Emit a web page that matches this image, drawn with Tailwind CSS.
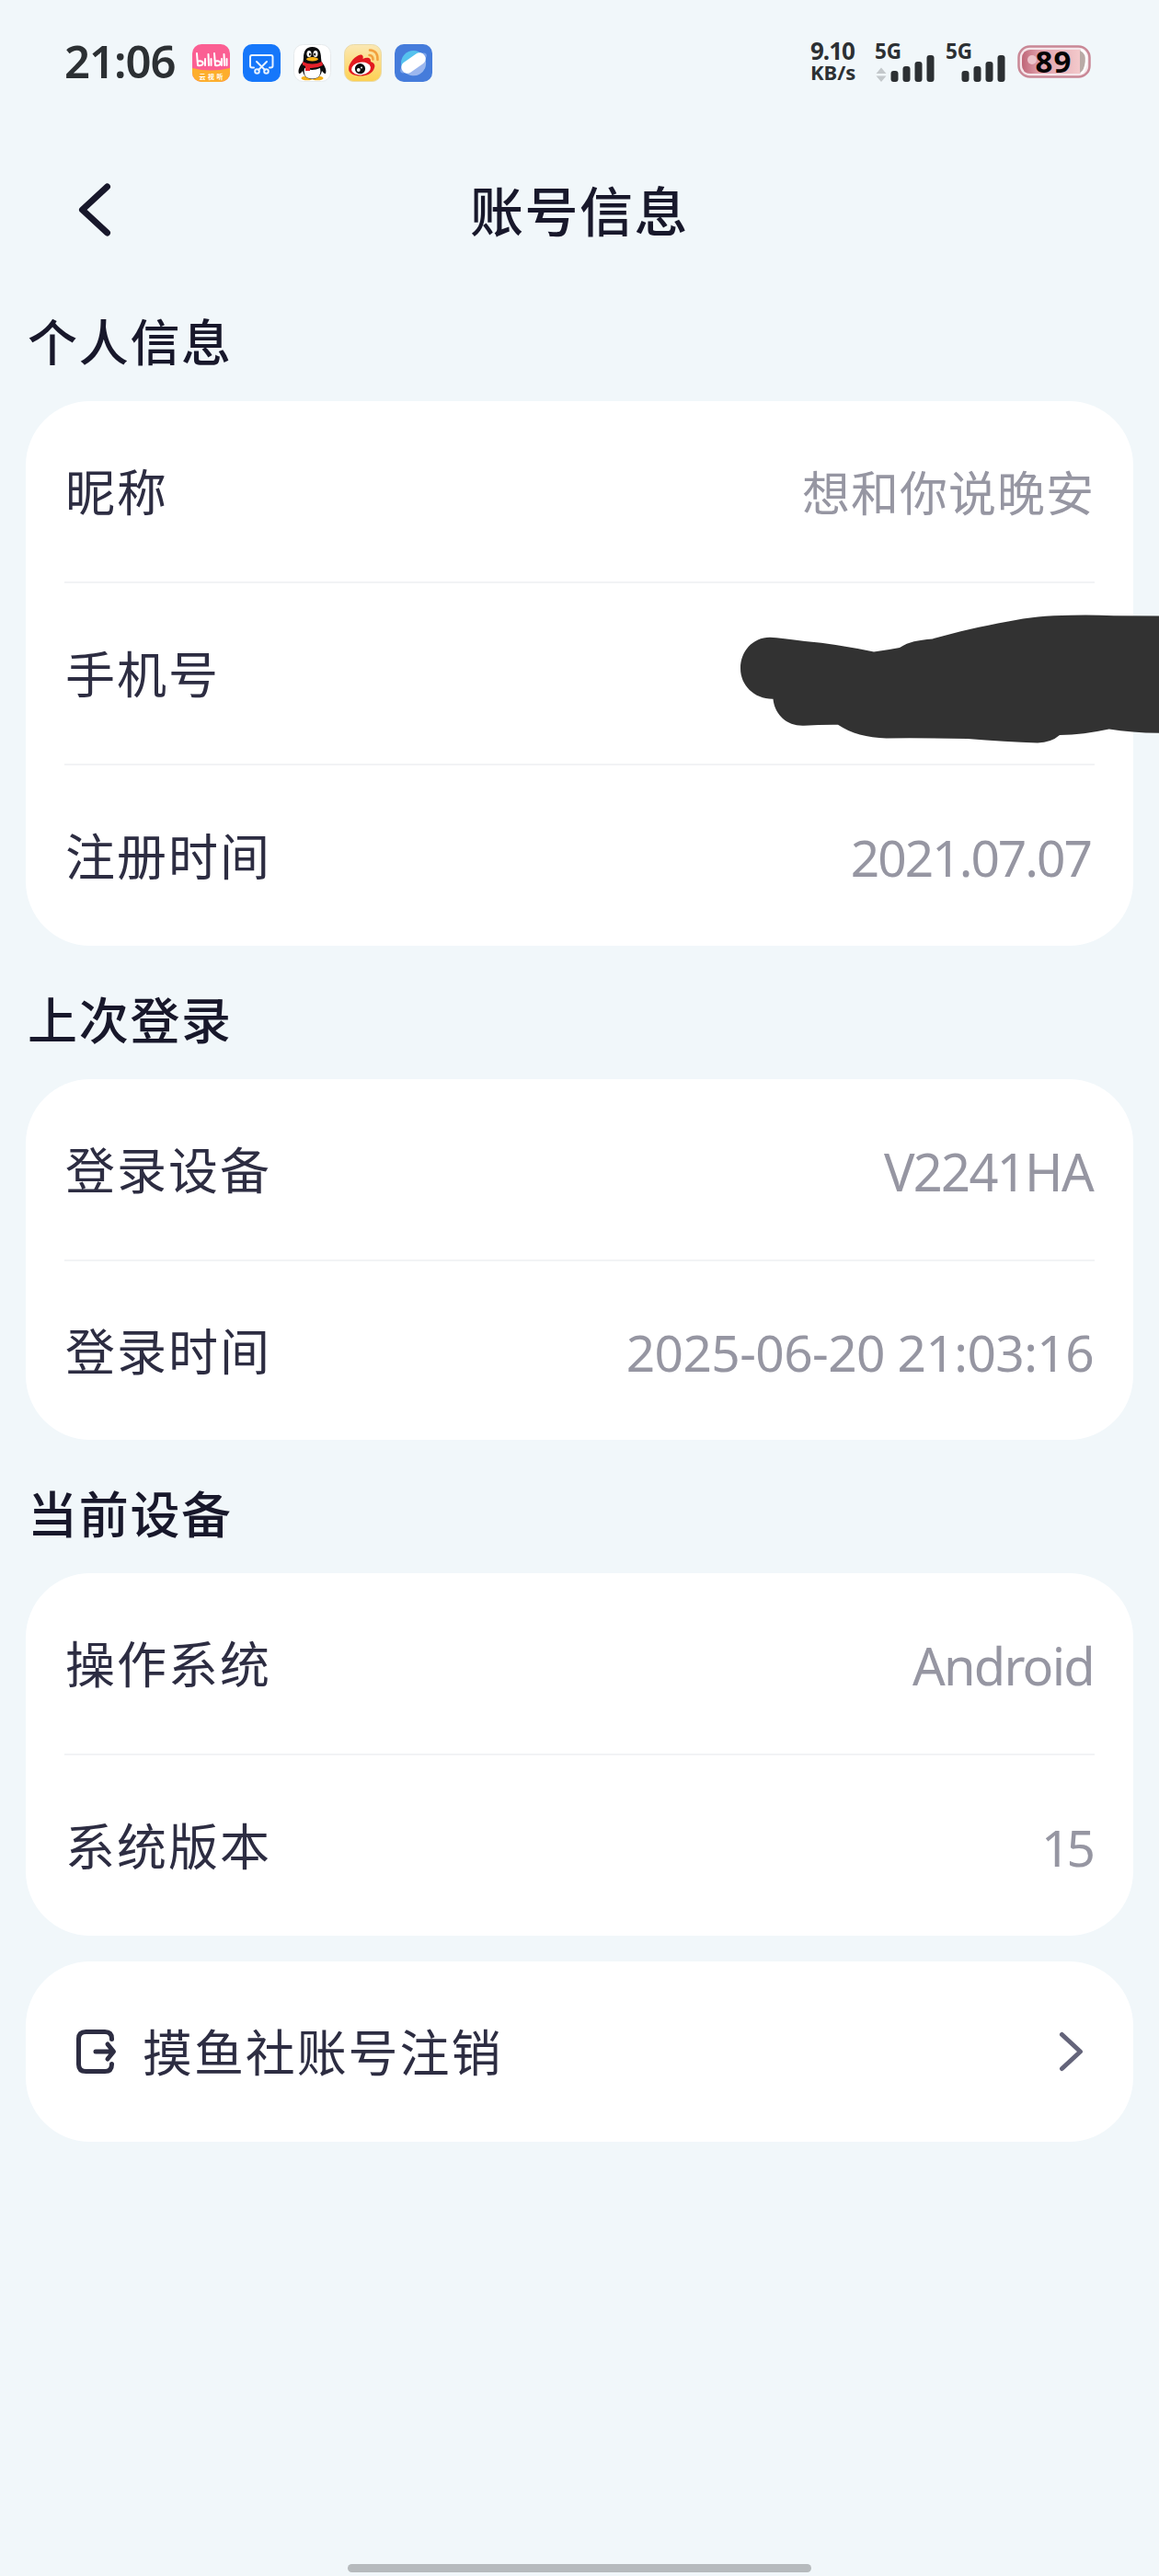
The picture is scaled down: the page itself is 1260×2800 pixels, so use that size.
<!DOCTYPE html>
<html lang="zh-CN">
<head>
<meta charset="utf-8">
<title>账号信息</title>
<script src="https://cdn.jsdelivr.net/npm/@tailwindcss/browser@4"></script>
</head>
<body class="bg-[#f1f7fa]">
<div class="relative flex h-[2800px] w-[1260px] flex-col overflow-hidden bg-[#f1f7fa] font-['Noto_Sans','Noto_Sans_CJK_SC',sans-serif] text-[#2d2d42]">

  <!-- status bar -->
  <div class="flex h-[136px] shrink-0 items-center justify-between pl-[70px] pr-[74px] text-[#2c3033]">
    <div class="flex items-center">
      <span class="w-[139px] pb-[4px] text-[49px] font-semibold leading-none tracking-[-1px]">21:06</span>
      <div class="flex gap-[14px]">
        <svg class="size-[41px]" viewBox="0 0 41 41">
          <defs>
            <clipPath id="app"><rect width="41" height="41" rx="10"/></clipPath>
            <linearGradient id="wb" x1="0" y1="0" x2="0" y2="1"><stop offset="0" stop-color="#fbe8b4"/><stop offset="1" stop-color="#fdd152"/></linearGradient>
          </defs>
          <g clip-path="url(#app)">
            <rect width="41" height="41" fill="#fb5f93"/>
            <path d="M0 26q20 5 41 0v16H0z" fill="#fdae2c"/>
            <g fill="none" stroke="#fff" stroke-width="2" stroke-linecap="round" stroke-linejoin="round">
              <path d="M5 10l1 13c7 2 8-6 .5-4.500M14 16v7M17.500 11l.5 12M20.500 16v7M24 10l1 13c7 2 8-6 .5-4.500M32 16v7M34.500 11l.5 12M37.500 16v7"/>
            </g>
            <text x="20.500" y="37.500" text-anchor="middle" font-size="7" font-weight="700" textLength="26" fill="#fff">云视听</text>
          </g>
        </svg>
        <svg class="size-[41px]" viewBox="0 0 41 41">
          <rect width="41" height="41" rx="10" fill="#1677fa"/>
          <g fill="none" stroke="#e8f2ff" stroke-width="2" stroke-linecap="round">
            <path d="M12 25.500H10q-2 0-2-2V14q0-2 2-2h20.500q2 0 2 2v9.500q0 2-2 2H29"/>
            <path d="M15 19l9 9M26 19l-9 9"/>
            <circle cx="15.500" cy="29.500" r="2.300"/><circle cx="25.500" cy="29.500" r="2.300"/>
          </g>
        </svg>
        <svg class="size-[41px]" viewBox="0 0 41 41">
          <rect x=".5" y=".5" width="40" height="40" rx="10" fill="#fff" stroke="#e6eaec"/>
          <ellipse cx="15" cy="37" rx="6.500" ry="2.300" fill="#f7b21a"/><ellipse cx="26" cy="37" rx="6.500" ry="2.300" fill="#f7b21a"/>
          <path d="M20.500 3C13 3 11 8.500 11 15l-.5 4C7 23.500 4.500 28 6 32c1.500.5 3-1.500 4-3 1 5 4.500 9 10.500 9S30 34 31 29c1 1.500 2.500 3.500 4 3 1.500-4-1-8.500-4.500-13l-.5-4c0-6.500-2-12-9.500-12z" fill="#0c0c0e"/>
          <path d="M12 26q8 4 17 0 2 11.500-8.500 11.500T12 26z" fill="#fff"/>
          <ellipse cx="17" cy="10.500" rx="2.500" ry="3.500" fill="#fff"/><ellipse cx="24" cy="10.500" rx="2.500" ry="3.500" fill="#fff"/>
          <ellipse cx="17.800" cy="11" rx="1" ry="1.500" fill="#111"/><ellipse cx="23.200" cy="11" rx="1" ry="1.500" fill="#111"/>
          <ellipse cx="20.500" cy="16.300" rx="6.500" ry="2.200" fill="#f7b21a"/>
          <path d="M10 19q10.500 5 21 0l1 4q-7 3.500-14 3v3h-5v-5l-3-1.500z" fill="#e5212b"/>
        </svg>
        <svg class="size-[41px]" viewBox="0 0 41 41">
          <rect x=".5" y=".5" width="40" height="40" rx="10" fill="url(#wb)" stroke="#e9d9a6"/>
          <path d="M5 27c0-7 8-15 13-15.500 3 0 3 2.500 2.500 4.500 4-2 9-2 8.500 3 5 1.500 5 5 3.500 8-2 5-8 7.500-14.500 7.500S5 32 5 27z" fill="#e2191f"/>
          <ellipse cx="18.500" cy="26.500" rx="10.500" ry="6.800" fill="#fff" transform="rotate(-8 18.500 26.500)"/>
          <circle cx="17.500" cy="26.700" r="5.600" fill="#0d0d0d"/><circle cx="15.800" cy="28" r="1.900" fill="#fff"/><circle cx="19" cy="25.500" r=".9" fill="#fff"/>
          <path d="M28 6.500q9 .5 8.500 10.500M27.500 12q4 .5 4 4.500" fill="none" stroke="#f2a03d" stroke-width="2.500" stroke-linecap="round"/>
        </svg>
        <svg class="size-[41px]" viewBox="0 0 41 41">
          <rect width="41" height="41" rx="10" fill="#457cdb"/>
          <ellipse cx="20.500" cy="20.500" rx="17" ry="6" transform="rotate(-35 20.500 20.500)" fill="#7fa6ea"/>
          <circle cx="20.500" cy="20.500" r="13.500" fill="#56c2ee"/>
          <path d="M33.500 16.500A13.500 13.500 0 0 1 10 29z" fill="#9cb7ee"/>
          <rect x="6" y="14" width="29" height="13" rx="6" transform="rotate(-35 20.500 20.500)" fill="#fff"/>
        </svg>
      </div>
    </div>

    <div class="flex items-center">
      <div class="flex w-[70px] flex-col pb-[3px] font-bold leading-none">
        <span class="text-[26px] leading-[24px] tracking-[-1px]">9.10</span>
        <span class="text-[22px] leading-[23px]">KB/s</span>
      </div>
      <svg class="h-[44px] w-[155px] overflow-visible" viewBox="950 45 155 44" fill="#2c3033">
        <text x="950" y="62.500" font-size="22.500" font-weight="700" textLength="29">5G</text>
        <text x="1027" y="62.500" font-size="22.500" font-weight="700" textLength="29">5G</text>
        <path d="M951.500 79l5.500-6.500 5.500 6.500zM951.500 81.500h11L957 88z" fill="#c3c8cb"/>
        <rect x="967.500" y="76" width="8" height="12" rx="3"/><rect x="980.500" y="71" width="8" height="17" rx="3"/><rect x="993.500" y="66" width="8" height="22" rx="3"/><rect x="1006.500" y="59" width="8" height="29" rx="3"/>
        <rect x="1044.500" y="76" width="8" height="12" rx="3"/><rect x="1057.500" y="71" width="8" height="17" rx="3"/><rect x="1070.500" y="66" width="8" height="22" rx="3"/><rect x="1083.500" y="59" width="8" height="29" rx="3"/>
      </svg>
      <svg class="mb-[2px] h-[36px] w-[80px] overflow-visible" viewBox="0 0 80 36">
        <defs><linearGradient id="bt"><stop offset="0" stop-color="#bf6577"/><stop offset=".3" stop-color="#e0a0ab"/><stop offset="1" stop-color="#f3c9cb"/></linearGradient></defs>
        <rect x="1.500" y="1.500" width="77" height="33" rx="12" fill="#f5e6ea" stroke="#c98896" stroke-width="2.500"/>
        <rect x="5" y="5" width="70" height="26" rx="10" fill="#b9aaa6"/>
        <path d="M15 5h53v26H15Q5 31 5 21v-6Q5 5 15 5z" fill="url(#bt)"/>
        <path d="M69 5q7 3 6 13t-6 13" fill="none" stroke="#fff" stroke-width="2.500"/>
        <circle cx="16" cy="16" r="5" fill="#edc4cb"/>
        <text x="39" y="29.500" text-anchor="middle" font-size="33" font-weight="700" textLength="39" fill="#050505">89</text>
      </svg>
    </div>
  </div>

  <!-- title bar -->
  <div class="grid h-[188px] shrink-0 grid-cols-[1fr_auto_1fr] items-center pl-[84px] pr-[84px] text-[#18182b]">
    <svg class="mb-[4px] h-[60px] w-[40px]" viewBox="0 0 40 60" fill="none" stroke="currentColor" stroke-width="7" stroke-linecap="round" stroke-linejoin="round"><path d="M32.500 5L5.500 30l27 25"/></svg>
    <h1 class="pb-[1px] text-[58px] font-medium leading-none tracking-[1.500px]">账号信息</h1>
    <span></span>
  </div>

  <h2 class="mb-[15px] flex h-[97px] shrink-0 items-center pb-[1px] pl-[30px] text-[54px] font-medium leading-none tracking-[1.700px] text-[#18182b]">个人信息</h2>
  <section class="mx-[28px] shrink-0 rounded-[70px] bg-white px-[42px]">
    <div class="flex h-[198px] items-center justify-between border-b-2 border-[#f2f3f5]">
      <span class="pl-[1px] pt-[2px] text-[54px] leading-none tracking-[2px]">昵称</span>
      <span class="pt-[4px] text-[52px] leading-none tracking-[1px] text-[#9696a2]">想和你说晚安</span>
    </div>
    <div class="flex h-[198px] items-center justify-between border-b-2 border-[#f2f3f5]">
      <span class="pl-[1px] pt-[1px] text-[54px] leading-none tracking-[2px]">手机号</span>
    </div>
    <div class="flex h-[196px] items-center justify-between">
      <span class="pl-[1px] pt-[1px] text-[54px] leading-none tracking-[2px]">注册时间</span>
      <span class="pr-[4px] pt-[3px] text-[55px] leading-none tracking-[-2px] text-[#9696a2]">2021.07.07</span>
    </div>
  </section>

  <h2 class="mb-[15px] mt-[33px] flex h-[97px] shrink-0 items-center pb-[1px] pl-[30px] text-[54px] font-medium leading-none tracking-[1.700px] text-[#18182b]">上次登录</h2>
  <section class="mx-[28px] shrink-0 rounded-[70px] bg-white px-[42px]">
    <div class="flex h-[198px] items-center justify-between border-b-2 border-[#f2f3f5]">
      <span class="pl-[1px] pt-[1px] text-[54px] leading-none tracking-[2px]">登录设备</span>
      <span class="pr-[2px] pt-[3px] text-[56px] leading-none tracking-[-1.700px] text-[#9696a2]">V2241HA</span>
    </div>
    <div class="flex h-[194px] items-center justify-between">
      <span class="pl-[1px] pt-[1px] text-[54px] leading-none tracking-[2px]">登录时间</span>
      <span class="pr-[1px] pt-[3px] text-[55px] leading-none tracking-[-0.600px] text-[#9696a2]">2025-06-20 21:03:16</span>
    </div>
  </section>

  <h2 class="mb-[15px] mt-[33px] flex h-[97px] shrink-0 items-center pb-[1px] pl-[30px] text-[54px] font-medium leading-none tracking-[1.700px] text-[#18182b]">当前设备</h2>
  <section class="mx-[28px] shrink-0 rounded-[70px] bg-white px-[42px]">
    <div class="flex h-[198px] items-center justify-between border-b-2 border-[#f2f3f5]">
      <span class="pl-[1px] pt-[1px] text-[54px] leading-none tracking-[2px]">操作系统</span>
      <span class="pr-[1px] pt-[3px] text-[56px] leading-none tracking-[-1.800px] text-[#9696a2]">Android</span>
    </div>
    <div class="flex h-[196px] items-center justify-between">
      <span class="pl-[1px] pt-[1px] text-[54px] leading-none tracking-[2px]">系统版本</span>
      <span class="pr-[3px] pt-[3px] text-[55px] leading-none tracking-[-4px] text-[#9696a2]">15</span>
    </div>
  </section>

  <section class="mx-[28px] mt-[28px] flex h-[196px] shrink-0 items-center rounded-[70px] bg-white pl-[53px] pr-[53px]">
    <svg class="h-[52px] w-[48px]" viewBox="0 0 48 52" fill="none" stroke="currentColor" stroke-width="5" stroke-linecap="round" stroke-linejoin="round">
      <path d="M40.500 12.500V12q0-7.500-7.500-7.500H12.500Q4.500 4.500 4.500 12v28q0 7.500 8 7.500H33q7.500 0 7.500-7.500v-.5"/>
      <path d="M23 26h18M36 18l6.500 8-6.500 8"/>
    </svg>
    <span class="ml-[26px] flex-1 pt-[1px] text-[54px] leading-none tracking-[1.900px]">摸鱼社账号注销</span>
    <svg class="h-[44px] w-[28px]" viewBox="0 0 28 44" fill="none" stroke="#64647a" stroke-width="5" stroke-linecap="round" stroke-linejoin="round"><path d="M3.500 3.500L23.500 22l-20 18.500"/></svg>
  </section>

  <!-- home indicator -->
  <div class="mx-auto mb-[4px] mt-auto h-[9px] w-[504px] shrink-0 rounded-full bg-[#b6babd]"></div>

  <!-- marker stroke hiding the phone number -->
  <svg class="absolute left-[800px] top-[660px] h-[155px] w-[460px]" viewBox="800 660 460 155" fill="#323232">
    <path d="M837 692.800C818 693 805 708 805 726.500 805 745 820 760 840.500 759.700 842 776 855 789.500 874 788.700Q892 787.500 911 787.700C925 797 943 802 963.500 802.400Q1008 802 1052 803 1092 806 1128 807.500 1143 807 1152 799 1178 798.500 1205.700 792.500 1230 796.500 1260 796.800V669.500L1211 669.300Q1187 668 1164 668.700C1138 669 1118 671 1096 675.400 1065 681 1040 687 1013.700 694.400 997 696 989 697 978 704Q965 706.500 950 708.600 910 700 875 697 850 693.500 837 692.800z"/>
  </svg>
</div>
</body>
</html>
